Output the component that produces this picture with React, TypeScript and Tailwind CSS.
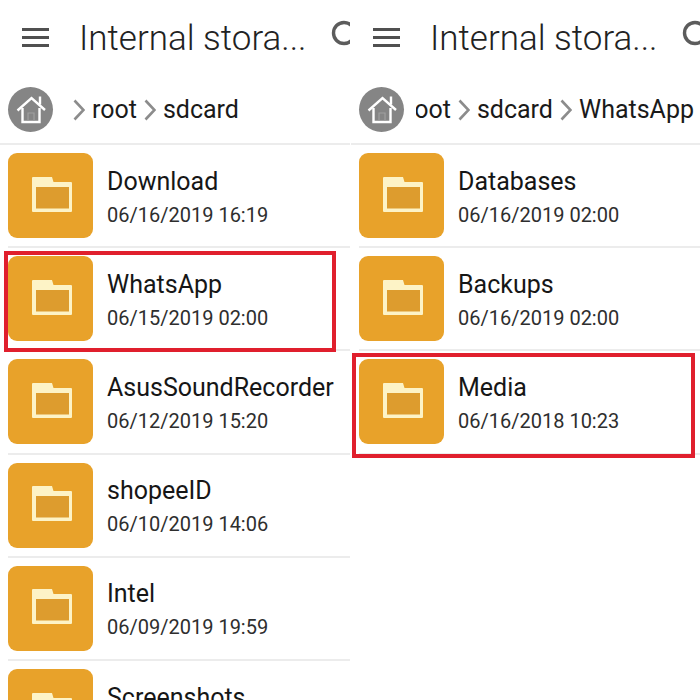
const LEFT_ROWS = [
  { name: 'Download', date: '06/16/2019 16:19' },
  { name: 'WhatsApp', date: '06/15/2019 02:00', marked: true },
  { name: 'AsusSoundRecorder', date: '06/12/2019 15:20' },
  { name: 'shopeeID', date: '06/10/2019 14:06' },
  { name: 'Intel', date: '06/09/2019 19:59' },
  { name: 'Screenshots', date: '\u00a0' },
];

const RIGHT_ROWS = [
  { name: 'Databases', date: '06/16/2019 02:00' },
  { name: 'Backups', date: '06/16/2019 02:00' },
  { name: 'Media', date: '06/16/2018 10:23', marked: true },
];

type Row = { name: string; date: string; marked?: boolean };

function HomeBadge() {
  return (
    <div className="w-[45px] h-[45px] rounded-full bg-[#858585] flex items-center justify-center shrink-0">
      <svg width="30" height="30" viewBox="0 0 30 30" fill="none" stroke="#ffffff" strokeWidth="2.4">
        <path d="M1.5 15.5 L15.5 3 L29 15" />
        <path d="M6.5 13 V27 H23.5 V13" />
        <path d="M12 26 V18 H18 V26" strokeWidth="1.2" stroke="#a0a0a0" />
        <path d="M24 9.5 V1.5" />
      </svg>
    </div>
  );
}

function Chevron() {
  return (
    <svg width="12" height="24" viewBox="0 0 12 24" fill="none" stroke="#8c8c8c" strokeWidth="2.6" className="shrink-0">
      <path d="M1.5 2.5 L10.5 12 L1.5 21.5" />
    </svg>
  );
}

function FolderTile() {
  return (
    <div className="w-[85px] h-[85px] rounded-[9px] bg-[#e8a22a] flex items-center justify-center shrink-0">
      <svg width="40" height="36" viewBox="0 0 40 36" className="ml-[3px] mb-[2px]">
        <path d="M0 1 Q0 0 1 0 H20 L21.5 5 H39 Q40 5 40 6 V34 Q40 35 39 35 H1 Q0 35 0 34 Z" fill="#fdf3c6" />
        <rect x="4" y="10" width="33" height="21.5" fill="#dd9c2e" />
      </svg>
    </div>
  );
}

function FileRow({ row, boxClass }: { row: Row; boxClass: string }) {
  return (
    <div className="relative h-[103.2px] flex items-center gap-[14px] border-b-2 border-[#ececec] ml-2">
      <FolderTile />
      <div className="flex flex-col min-w-0 pt-[3px]">
        <span className="text-[25px] leading-[34px] text-[#161616] whitespace-nowrap">{row.name}</span>
        <span className="text-[20px] leading-[30px] mt-[1px] text-[#2e2e2e] whitespace-nowrap">{row.date}</span>
      </div>
      {row.marked && <div className={`absolute border-[4px] border-[#e01f2d] ${boxClass}`} />}
    </div>
  );
}

function Panel({
  rows,
  crumbs,
  shift,
  boxClass,
  inset,
}: {
  rows: Row[];
  crumbs: string[];
  shift: string;
  boxClass: string;
  inset: string;
}) {
  return (
    <div className={`w-[350px] h-[700px] overflow-hidden ${inset}`}>
      <div className="h-[76px] flex items-center pl-[22px] pt-[1px]">
        <div className="w-[27px] flex flex-col gap-[5px] shrink-0 mb-[2px]">
          <div className="h-[3px] bg-[#505050]" />
          <div className="h-[3px] bg-[#505050]" />
          <div className="h-[3px] bg-[#505050]" />
        </div>
        <span className="ml-[30px] mt-[1px] text-[35px] font-light text-[#222222] whitespace-nowrap">Internal stora...</span>
        <svg width="30" height="30" viewBox="0 0 30 30" fill="none" stroke="#5c5c5c" strokeWidth="3.4" className="ml-[25px] mb-[8px] shrink-0">
          <circle cx="13" cy="13" r="10.5" />
        </svg>
      </div>
      <div className="h-[67px] flex items-center pl-2">
        <HomeBadge />
        <div className="flex-1 min-w-0 overflow-hidden ml-[12px]">
          <div className={`flex items-center text-[25px] text-[#1a1a1a] whitespace-nowrap ${shift}`}>
            {crumbs.map((crumb) => (
              <div key={crumb} className="flex items-center">
                <Chevron />
                <span className="mx-[7px]">{crumb}</span>
              </div>
            ))}
          </div>
        </div>
      </div>
      <div className="border-t-2 border-[#ececec]">
        {rows.map((row) => (
          <FileRow key={row.name} row={row} boxClass={boxClass} />
        ))}
      </div>
    </div>
  );
}

export default function App() {
  return (
    <div className="w-[700px] h-[700px] bg-white flex overflow-hidden" style={{ fontFamily: 'Roboto, sans-serif' }}>
      <Panel
        rows={LEFT_ROWS}
        crumbs={['root', 'sdcard']}
        shift="ml-[8px]"
        inset=""
        boxClass="left-[-4px] top-[3px] w-[332px] h-[101px]"
      />
      <Panel
        rows={RIGHT_ROWS}
        crumbs={['root', 'sdcard', 'WhatsApp']}
        shift="ml-[-29px]"
        inset="pl-[1px]"
        boxClass="left-[-7px] top-[1.5px] w-[343px] h-[105px]"
      />
    </div>
  );
}
